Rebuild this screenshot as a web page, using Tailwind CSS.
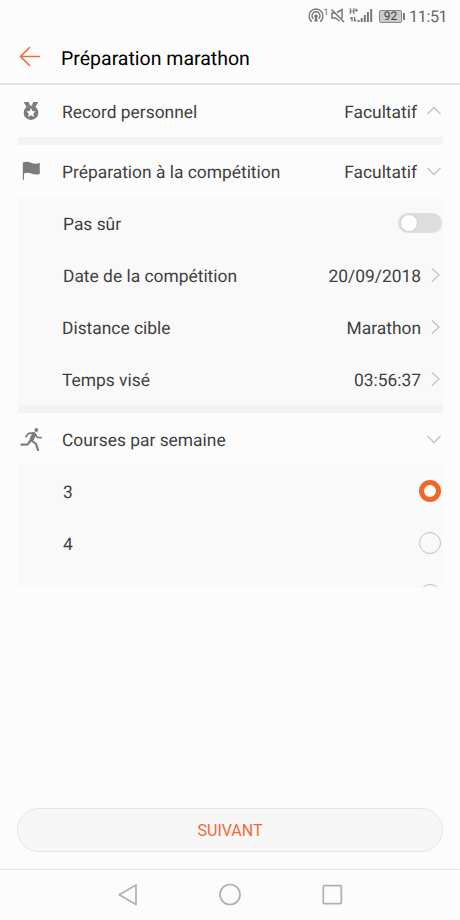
<!DOCTYPE html>
<html lang="fr">
<head>
<meta charset="utf-8">
<title>Préparation marathon</title>
<script src="https://cdn.jsdelivr.net/npm/@tailwindcss/browser@4"></script>
</head>
<body class="flex h-[920px] w-[460px] flex-col overflow-hidden bg-[#fcfcfc] font-[Roboto,sans-serif] text-[17.4px] leading-6 text-[#3f3f3f] [text-rendering:geometricPrecision]">
  <!-- Status bar -->
  <div class="flex h-8 shrink-0 items-center pl-[307px] text-[#707070]">
    <svg class="h-6 w-[70px] shrink-0" viewBox="307 4 70 24" fill="none" stroke="#777" stroke-width="1.3">
      <path d="M311.800 21.600a7 7 0 1 1 8.400 0M313.300 18.700a4 4 0 1 1 5.400 0" stroke-width="1.400"/>
      <path d="M316 14.500a1.700 1.700 0 0 1 .9 3.200l.8 3.800h-3.400l.8-3.800a1.700 1.700 0 0 1 .9-3.200z" fill="#777" stroke="none"/>
      <text x="323.600" y="14.800" font-size="9" fill="#666" stroke="none">1</text>
      <path d="M331.500 9.500 344 22M337 12.500l5-3v9M339.500 21l-4-3h-3.500v-5h2.500" stroke-width="1.500"/>
      <text x="349.200" y="14.300" font-size="8" font-weight="700" fill="#707070" stroke="none">H</text>
      <path d="M354.800 10.200h3.200M356.400 8.600v3.200" stroke-width="1.100"/>
      <path d="M352 21.500v-4.500M354.500 17v4.500M350.300 18.800l1.700-1.700M354.500 21.400l1.700-1.700" stroke-width="1.300"/>
      <path d="M358.600 22v-2M361.700 22v-4M364.800 22v-7M367.900 22v-10M371.200 22v-13" stroke-width="2"/>
    </svg>
    <div class="ml-[2px] flex h-[13px] w-[23px] items-center justify-center rounded-[2px] border border-[#888] bg-[#cbcbcb] p-px text-[12px] leading-none text-[#444]">92</div>
    <div class="ml-px h-[7px] w-[2px] bg-[#777]"></div>
    <div class="ml-[4px] pt-px text-[16.2px] tracking-[-0.4px] text-[#666]">11:51</div>
  </div>
  <!-- Title bar -->
  <header class="flex h-[53px] shrink-0 items-center border-b-2 border-[#e2e2e2] pb-px pl-[19px]">
    <svg class="h-[22px] w-[22px]" viewBox="0 0 22 22" fill="none" stroke="#ed6b36" stroke-width="1.600" stroke-linecap="round" stroke-linejoin="round"><path d="M20.500 10.500H1.500M10.500 1.500 1.500 10.500l9 9"/></svg>
    <h1 class="ml-5 pt-[3px] text-[19.500px] text-black">Préparation marathon</h1>
  </header>
  <!-- Sections -->
  <main class="mx-[18px] flex w-[425px] flex-1 flex-col">
    <div class="flex h-[52px] items-center">
      <svg class="h-5 w-[26px]" viewBox="18 101 26 20" fill="#7c7c7c"><path d="M23.700 102h5l1.300 3.500-3.500 1.600zM38.200 102h-5l-1.300 3.500 3.500 1.600z"/><circle cx="31" cy="112.700" r="7.300"/><path fill="#fcfcfc" d="m31 108 1.400 3 3.300.4-2.400 2.200.6 3.300-2.900-1.600-2.900 1.600.6-3.300-2.400-2.200 3.300-.4z"/></svg>
      <span class="ml-[18px] pt-[4px]">Record personnel</span>
      <span class="ml-auto pt-[4px]">Facultatif</span>
      <svg class="mr-[2px] ml-[10px] h-4 w-[14px]" viewBox="0 0 14 16" fill="none" stroke="#c3c3c3" stroke-width="1.300"><path d="m.5 11 6.500-6.500 6.500 6.500"/></svg>
    </div>
    <div class="h-2 bg-[#f3f3f3]"></div>
    <div class="flex h-[52px] items-center">
      <svg class="h-5 w-[26px]" viewBox="18 161 26 20" fill="#7c7c7c"><path d="M22.800 162.500c3-1.200 6-.8 8.400.3s4.900 1.200 8.600.3v10.800c-3 1.200-6 .7-8.600-.3s-5-1-7.200 0v6.200h-1.200z"/></svg>
      <span class="ml-[18px] pt-[4px]">Préparation à la compétition</span>
      <span class="ml-auto pt-[4px]">Facultatif</span>
      <svg class="mr-[2px] ml-[10px] h-4 w-[14px]" viewBox="0 0 14 16" fill="none" stroke="#c3c3c3" stroke-width="1.300"><path d="m.5 5 6.500 6.500 6.500-6.500"/></svg>
    </div>
    <div class="bg-[#f9f9f9] pl-[44px]">
      <div class="flex h-[52px] items-center justify-between"><span class="pt-[4px] pl-px">Pas sûr</span>
        <div class="mr-px flex h-5 w-[44px] items-center rounded-full bg-[#dedede] pl-[3px]"><div class="h-4 w-4 rounded-full bg-white shadow-[0_0_2px_rgba(0,0,0,0.15)]"></div></div>
      </div>
      <div class="flex h-[52px] items-center"><span class="pt-[4px] pl-px">Date de la compétition</span><span class="ml-auto pt-[4px]">20/09/2018</span>
        <svg class="mr-[3px] ml-[10px] h-4 w-[9px]" viewBox="0 0 9 16" fill="none" stroke="#c3c3c3" stroke-width="1.300"><path d="m1 1.500 7 6.500-7 6.500"/></svg></div>
      <div class="flex h-[52px] items-center"><span class="pt-[4px]">Distance cible</span><span class="ml-auto pt-[4px]">Marathon</span>
        <svg class="mr-[3px] ml-[10px] h-4 w-[9px]" viewBox="0 0 9 16" fill="none" stroke="#c3c3c3" stroke-width="1.300"><path d="m1 1.500 7 6.500-7 6.500"/></svg></div>
      <div class="flex h-[52px] items-center"><span class="pt-[4px]">Temps visé</span><span class="ml-auto pt-[4px]">03:56:37</span>
        <svg class="mr-[3px] ml-[10px] h-4 w-[9px]" viewBox="0 0 9 16" fill="none" stroke="#c3c3c3" stroke-width="1.300"><path d="m1 1.500 7 6.500-7 6.500"/></svg></div>
    </div>
    <div class="h-2 bg-[#f3f3f3]"></div>
    <div class="flex h-[52px] items-center">
      <svg class="h-6 w-[26px]" viewBox="18 427 26 24" fill="none" stroke="#7c7c7c" stroke-linecap="round" stroke-linejoin="round"><circle cx="36.300" cy="430" r="1.900" fill="#7c7c7c" stroke="none"/><path d="M34 434.500 31.800 439" stroke-width="4.200"/><path d="m34 432.800-5.300.6-2.900 3.300M35.500 434.500l1.800 2.800 4 .4" stroke-width="1.700"/><path d="m30.800 440-3 4.300-6.300.3M31.500 440.500l4.500 3.500 2 6" stroke-width="2.200"/></svg>
      <span class="ml-[18px] pt-[4px]">Courses par semaine</span>
      <svg class="mr-[2px] ml-auto h-4 w-[14px]" viewBox="0 0 14 16" fill="none" stroke="#c3c3c3" stroke-width="1.300"><path d="m.5 5 6.500 6.500 6.500-6.500"/></svg>
    </div>
    <div class="h-[122px] overflow-hidden bg-[#f9f9f9] pr-[2px] pl-[45px]">
      <div class="flex h-[52px] items-center justify-between"><span class="pt-[4px]">3</span><div class="h-[22px] w-[22px] rounded-full border-[5px] border-[#f2662b] bg-white"></div></div>
      <div class="flex h-[52px] items-center justify-between"><span class="pt-[4px]">4</span><div class="h-[22px] w-[22px] rounded-full border border-[#c2c2c2]"></div></div>
      <div class="flex h-[52px] items-center justify-between"><span></span><div class="h-[22px] w-[22px] rounded-full border border-[#c2c2c2]"></div></div>
    </div>
  </main>
  <!-- Next action -->
  <button class="mx-auto mb-[17px] h-[44px] w-[426px] shrink-0 rounded-full border border-[#e6e6e6] bg-[#f7f7f7] pt-[2px] text-[16px] text-[#ed6b36]">SUIVANT</button>
  <!-- System navigation -->
  <nav class="h-[51px] shrink-0 border-t border-[#e4e4e4]">
    <svg class="h-[50px] w-[460px]" viewBox="0 870 460 50" fill="none" stroke="#b0b0b0" stroke-width="1.700" stroke-linejoin="round"><path d="M136 885v19.500l-16.800-9.800z"/><circle cx="230" cy="894.500" r="10"/><rect x="323.300" y="885.600" width="18" height="18" rx="1"/></svg>
  </nav>
</body>
</html>
